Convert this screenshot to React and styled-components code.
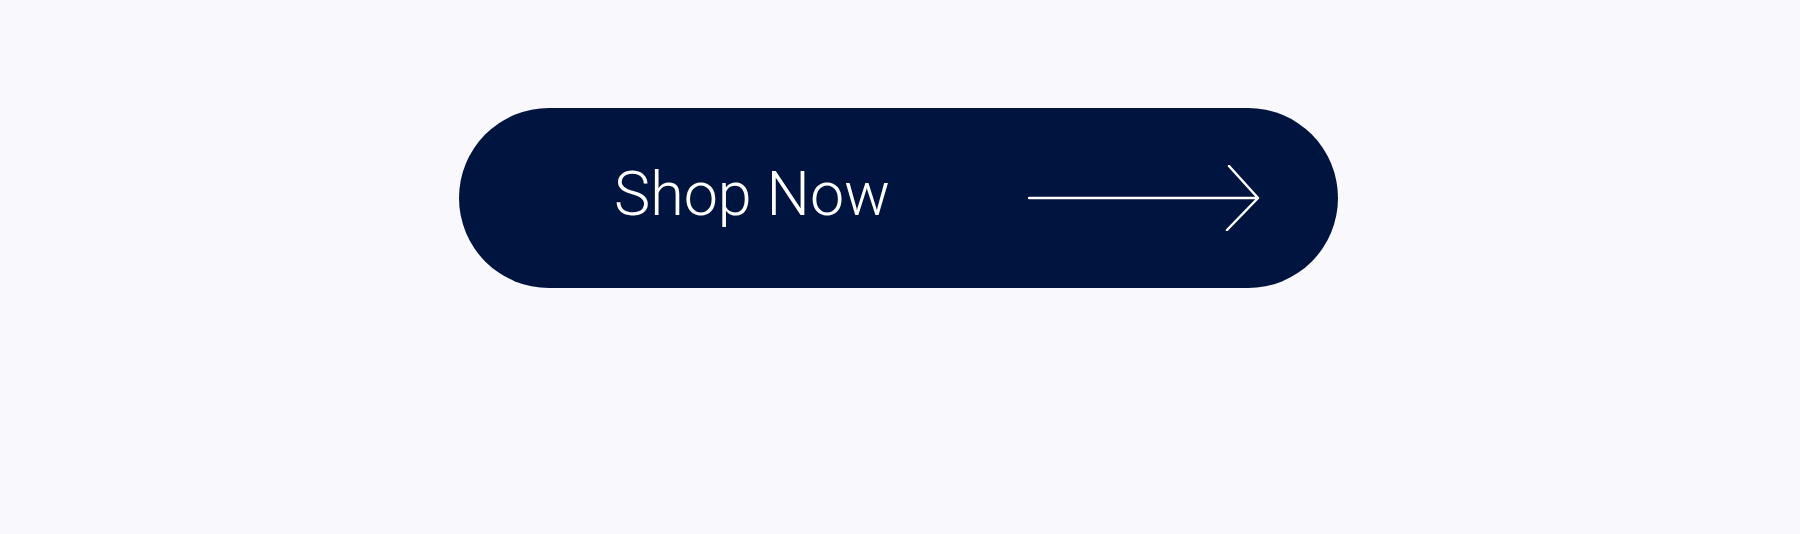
import styled, { createGlobalStyle } from "styled-components";

const GlobalStyle = createGlobalStyle`
  body {
    margin: 0;
    background: #f9f9fd;
  }
`;

const Page = styled.div`
  min-height: 534px;
  padding: 108px 0 0 459px;
  box-sizing: border-box;
`;

const Button = styled.div`
  display: flex;
  align-items: center;
  justify-content: space-between;
  width: 879px;
  height: 180px;
  padding: 0 78px 0 155px;
  box-sizing: border-box;
  border-radius: 9999px;
  background: #001440;
  color: #fff;
  cursor: pointer;
`;

const Label = styled.span`
  font-family: Roboto, "Liberation Sans", sans-serif;
  font-weight: 300;
  font-size: 61px;
  line-height: 1;
  margin-top: -7px;
`;

const Arrow = () => (
  <svg width="232" height="66" viewBox="0 0 232 66" fill="none">
    <path
      d="M1 33H230M201 1L230 33L199 65"
      stroke="#fff"
      strokeWidth="2.5"
      strokeLinecap="round"
      strokeLinejoin="round"
    />
  </svg>
);

const App = () => (
  <>
    <GlobalStyle />
    <Page>
      <Button role="button">
        <Label>Shop Now</Label>
        <Arrow />
      </Button>
    </Page>
  </>
);

export default App;
